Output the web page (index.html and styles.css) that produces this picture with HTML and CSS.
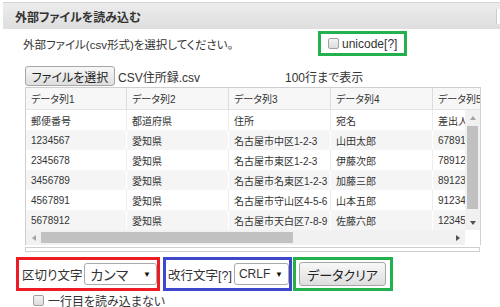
FILE: index.html
```html
<!DOCTYPE html>
<html lang="ja">
<head>
  <meta charset="UTF-8">
  <title>外部ファイルを読み込む</title>
  <meta name="viewport" content="width=device-width, initial-scale=1.0">
  <link rel="stylesheet" href="styles.css">
</head>
<body>

  <div class="page">
    <div class="head">
      <span class="head-title">外部ファイルを読み込む</span>
      <span class="head-tool"></span>
    </div>

    <div class="row intro">
      <span class="intro-text">外部ファイル(csv形式)を選択してください。</span>
      <label class="mark mark-green opt-unicode"><span class="box"></span>unicode<span class="help">[?]</span></label>
    </div>

    <div class="row filebar">
      <span class="btn file-btn">ファイルを選択</span>
      <span class="file-name">CSV住所録.csv</span>
      <span class="limit">100行まで表示</span>
    </div>

    <div class="grid">
      <div class="trow thead">
        <span class="cell">データ列1</span>
        <span class="cell">データ列2</span>
        <span class="cell">データ列3</span>
        <span class="cell">データ列4</span>
        <span class="cell">データ列5</span>
      </div>
      <div class="grid-mid">
        <div class="tbody">
          <div class="trow">
            <span class="cell">郵便番号</span><span class="cell">都道府県</span><span class="cell">住所</span><span class="cell">宛名</span><span class="cell">差出人</span>
          </div>
          <div class="trow alt">
            <span class="cell">1234567</span><span class="cell">愛知県</span><span class="cell">名古屋市中区1-2-3</span><span class="cell">山田太郎</span><span class="cell">6789123</span>
          </div>
          <div class="trow">
            <span class="cell">2345678</span><span class="cell">愛知県</span><span class="cell">名古屋市東区1-2-3</span><span class="cell">伊藤次郎</span><span class="cell">7891234</span>
          </div>
          <div class="trow alt">
            <span class="cell">3456789</span><span class="cell">愛知県</span><span class="cell">名古屋市名東区1-2-3</span><span class="cell">加藤三郎</span><span class="cell">8912345</span>
          </div>
          <div class="trow">
            <span class="cell">4567891</span><span class="cell">愛知県</span><span class="cell">名古屋市守山区4-5-6</span><span class="cell">山本五郎</span><span class="cell">9123456</span>
          </div>
          <div class="trow alt">
            <span class="cell">5678912</span><span class="cell">愛知県</span><span class="cell">名古屋市天白区7-8-9</span><span class="cell">佐藤六郎</span><span class="cell">1234567</span>
          </div>
        </div>
        <div class="vbar">
          <span class="arrow"><i class="tri tri-up"></i></span>
          <span class="vthumb"></span>
          <span class="arrow arrow-end"><i class="tri tri-down"></i></span>
        </div>
      </div>
      <div class="grid-foot">
        <div class="hbar">
          <span class="arrow"><i class="tri tri-left"></i></span>
          <span class="hthumb"></span>
          <span class="arrow arrow-end"><i class="tri tri-right"></i></span>
        </div>
        <span class="corner"></span>
      </div>
    </div>
    <div class="strip"></div>

    <div class="row controls">
      <div class="mark mark-red sep-group">
        <span class="lbl">区切り文字</span>
        <span class="select sel-sep">カンマ<i class="caret">▼</i></span>
      </div>
      <div class="mark mark-blue nl-group">
        <span class="lbl">改行文字<span class="help">[?]</span></span>
        <span class="select sel-nl">CRLF<i class="caret">▼</i></span>
      </div>
      <div class="mark mark-green clear-group">
        <span class="btn clear-btn">データクリア</span>
      </div>
    </div>

    <label class="row skip"><span class="box"></span>一行目を読み込まない</label>
  </div>

</body>
</html>
```

FILE: styles.css
```css
body {
  margin: 0;
  background: #fff;
  color: #333;
  font-family: "Liberation Sans", "Noto Sans CJK JP", sans-serif;
  font-size: 12px;
  font-feature-settings: "palt";
  overflow: hidden;
}
.page {
  width: 500px;
  height: 307px;
  overflow: hidden;
}
.row { display: flex; align-items: center; }

/* title bar */
.head {
  display: flex;
  align-items: center;
  margin: 2px 0 0 3px;
  height: 26px;
  border-top: 1px solid #d4d4d4;
  background: linear-gradient(#ececec, #dedede);
}
.head-title {
  flex: 1;
  padding-left: 12px;
  font-weight: bold;
  font-size: 12px;
}
.head-tool {
  width: 3px;
  height: 15px;
  background: #fff;
  border-left: 1px solid #ccc;
}

/* coloured markers */
.mark {
  display: flex;
  align-items: center;
  box-sizing: border-box;
  border: 3px solid;
}
.mark-green { border-color: #22b14c; }
.mark-red { border-color: #ed1c24; }
.mark-blue { border-color: #3f48cc; }

.help { color: #334; }

.box {
  display: inline-block;
  width: 9px;
  height: 9px;
  border: 1px solid #a0a0a0;
  border-radius: 2px;
  background: linear-gradient(#f4f4f4, #dcdcdc);
}

.intro { margin-top: 2px; height: 25px; }
.intro-text { width: 295px; padding-left: 23px; font-size: 11.5px; }
.opt-unicode {
  width: 89px;
  height: 25px;
  padding-left: 7px;
  font-size: 12px;
}
.opt-unicode .box { margin-right: 3px; }

/* file line */
.filebar { margin-top: 10px; height: 20px; }
.btn {
  display: flex;
  align-items: center;
  justify-content: center;
  box-sizing: border-box;
  border: 1px solid #a6a6a6;
  border-radius: 3px;
  background: linear-gradient(#f8f8f8, #dedede);
  color: #222;
}
.file-btn { margin-left: 25px; width: 90px; height: 20px; font-size: 12px; }
.file-name { margin-left: 3px; width: 167px; }
.limit { font-size: 12px; }

/* data grid */
.grid {
  margin: 1px 0 0 25px;
  width: 456px;
  box-sizing: border-box;
  border: 1px solid #cfcfcf;
  border-bottom: none;
  overflow: hidden;
  font-size: 10px;
}
.trow {
  display: flex;
  height: 20px;
  align-items: center;
  white-space: nowrap;
  background: #fff;
}
.trow.alt { background: #f5f5f5; }
.cell {
  flex: none;
  box-sizing: border-box;
  width: 102px;
  height: 100%;
  padding-left: 5px;
  display: flex;
  align-items: center;
  overflow: hidden;
  border-right: 1px solid #ececec;
}
.cell:first-child { width: 101px; }
.trow.alt .cell { border-right-color: #fff; }
.thead {
  height: 22px;
  background: #f7f7f7;
  border-bottom: 1px solid #e4e4e4;
  box-sizing: border-box;
}
.thead .cell { border-right-color: #dcdcdc; }

.grid-mid { display: flex; }
.tbody { width: 439px; overflow: hidden; }

.vbar {
  width: 15px;
  flex: none;
  display: flex;
  flex-direction: column;
  align-items: center;
  background: #f1f1f1;
}
.arrow {
  width: 15px;
  height: 15px;
  flex: none;
  display: flex;
  align-items: center;
  justify-content: center;
}
.vbar .arrow-end { margin-top: auto; }
.vthumb {
  width: 11px;
  height: 83px;
  margin-top: 1px;
  background: #c1c1c1;
}
.tri { width: 0; height: 0; border: 4px solid transparent; }
.tri-up { border-top: none; border-bottom: 4px solid #a3a3a3; border-width: 0 3.5px 4px; }
.tri-down { border-bottom: none; border-top: 4px solid #505050; border-width: 4px 3.5px 0; }
.tri-left { border-left: none; border-right: 4px solid #a3a3a3; border-width: 3.5px 4px 3.5px 0; }
.tri-right { border-right: none; border-left: 4px solid #505050; border-width: 3.5px 0 3.5px 4px; }

.grid-foot { display: flex; height: 15px; }
.hbar {
  width: 439px;
  display: flex;
  align-items: center;
  background: #f1f1f1;
}
.hbar .arrow-end { margin-left: auto; }
.hthumb {
  width: 252px;
  height: 11px;
  background: #c1c1c1;
}
.corner { width: 15px; background: #fff; }

.strip {
  margin: 2px 0 0 25px;
  width: 455px;
  height: 5px;
  box-sizing: border-box;
  border: 1px solid #cfcfcf;
}

/* bottom controls */
.controls { margin: 5px 0 0 16px; height: 34px; align-items: stretch; }
.lbl { font-size: 12.5px; white-space: nowrap; }
.select {
  display: flex;
  align-items: center;
  box-sizing: border-box;
  height: 22px;
  border: 1px solid #a9a9a9;
  border-radius: 3px;
  background: #fff;
  padding-left: 5px;
}
.caret { font-style: normal; font-size: 8px; margin-left: auto; margin-right: 5px; color: #111; }
.sep-group { width: 144px; padding-left: 3px; }
.sel-sep { width: 73px; margin-left: 2px; font-size: 14px; }
.nl-group { width: 129px; margin-left: 3px; padding-left: 2px; }
.sel-nl { width: 55px; margin-left: 2px; font-size: 12px; padding-left: 4px; }
.clear-group { width: 100px; margin-left: 1px; padding-left: 3px; }
.clear-btn { width: 87px; height: 24px; font-size: 13px; }

.skip { margin: 1px 0 0 33px; font-size: 12px; }
.skip .box { margin-right: 4px; }
```
